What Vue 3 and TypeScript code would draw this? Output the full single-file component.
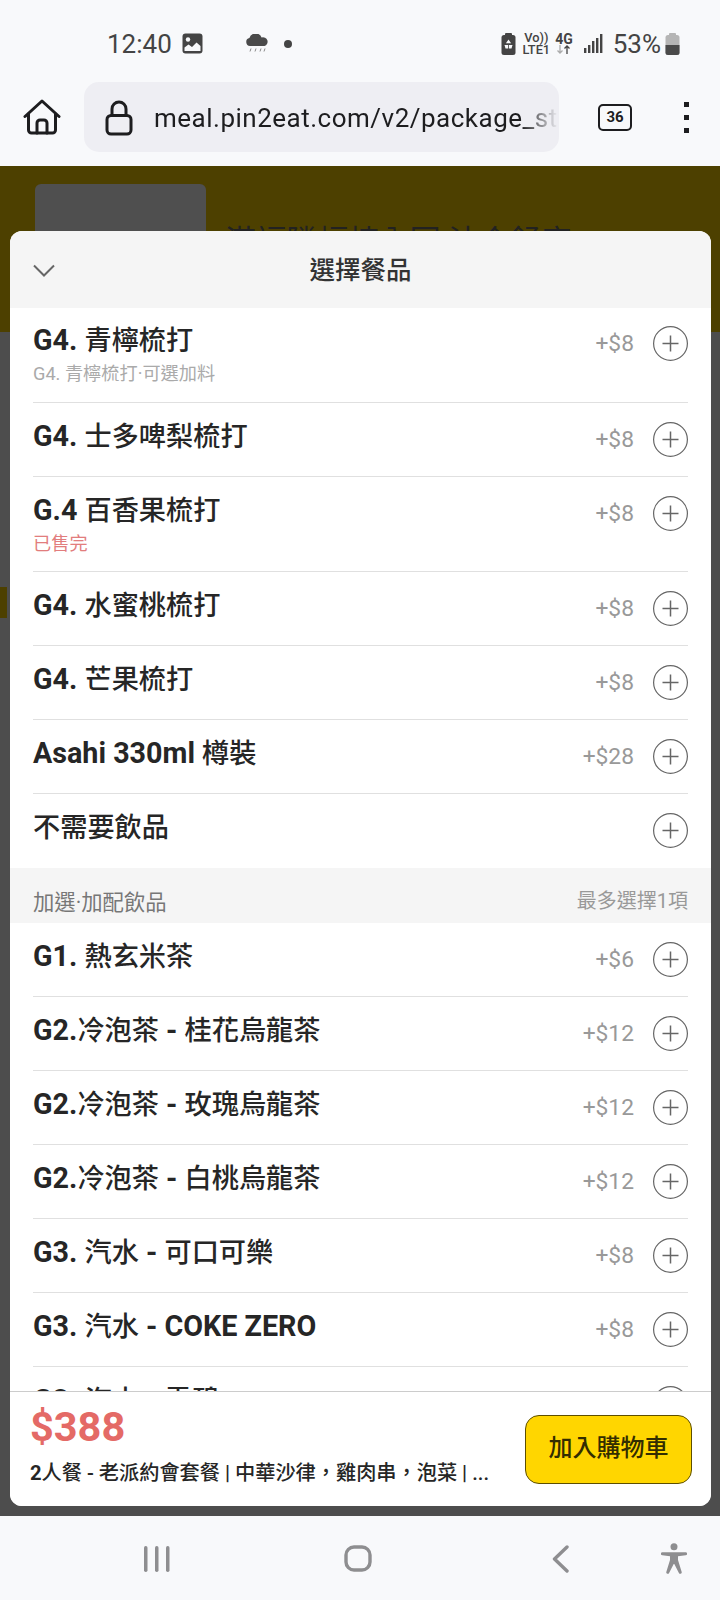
<script setup lang="ts">
interface Item { parts: string[]; price: string; note?: string; sold?: boolean }
// parts alternate: even index = Latin run, odd index = CJK run
const groupA: Item[] = [
  { parts: ['G4. ', '青檸梳打'], price: '+$8', note: 'G4. 青檸梳打·可選加料' },
  { parts: ['G4. ', '士多啤梨梳打'], price: '+$8' },
  { parts: ['G.4 ', '百香果梳打'], price: '+$8', note: '已售完', sold: true },
  { parts: ['G4. ', '水蜜桃梳打'], price: '+$8' },
  { parts: ['G4. ', '芒果梳打'], price: '+$8' },
  { parts: ['Asahi 330ml ', '樽裝'], price: '+$28' },
  { parts: ['', '不需要飲品'], price: '' },
]
const groupB: Item[] = [
  { parts: ['G1. ', '熱玄米茶'], price: '+$6' },
  { parts: ['G2.', '冷泡茶', ' - ', '桂花烏龍茶'], price: '+$12' },
  { parts: ['G2.', '冷泡茶', ' - ', '玫瑰烏龍茶'], price: '+$12' },
  { parts: ['G2.', '冷泡茶', ' - ', '白桃烏龍茶'], price: '+$12' },
  { parts: ['G3. ', '汽水', ' - ', '可口可樂'], price: '+$8' },
  { parts: ['G3. ', '汽水', ' - COKE ZERO'], price: '+$8' },
  { parts: ['G3. ', '汽水', ' - ', '雪碧'], price: '+$8' },
]
</script>

<template>
  <div class="phone">
    <div class="status">
      <span class="time">12:40</span>
      <svg class="ic-gallery" width="21" height="21" viewBox="0 0 21 21">
        <rect x="0.5" y="0.5" width="20" height="20" rx="3" fill="#444" />
        <circle cx="6" cy="6.5" r="2.2" fill="#f8f9fb" />
        <path d="M2.5 18v-3.5l4-3 3.5 2.5 4.5-4.5 4 3.5V18z" fill="#f8f9fb" />
      </svg>
      <svg class="ic-rain" width="24" height="20" viewBox="0 0 24 20">
        <path d="M5 12a4 4 0 0 1-.6-7.9A6.5 6.5 0 0 1 16.6 3.4 4.3 4.3 0 0 1 19.500 12z" fill="#4a4a4a" />
        <path d="M6 14.500l-1 3M11 14.500l-1 3M16 14.500l-1 3M20 14.500l-1 3" stroke="#8a8a8a" stroke-width="1" fill="none" />
      </svg>
      <span class="dot"></span>
      <span class="status-gap"></span>
      <svg class="ic-saver" width="15" height="22" viewBox="0 0 15 22">
        <rect x="4" y="0" width="7" height="3" rx="1" fill="#444" />
        <rect x="0.500" y="2" width="14" height="20" rx="2.500" fill="#444" />
        <path d="M7.500 6.500l2.600 3.800H4.900zM3.500 12h3.700v3.500H4.500zM8 12h3.500l-1 3.500H8z" fill="#f8f9fb" />
      </svg>
      <div class="net"><span>Vo))</span><span>LTE1</span></div>
      <div class="fourg"><span>4G</span><svg width="15" height="9" viewBox="0 0 15 9"><path d="M4 0v8M1.500 5.500L4 8l2.500-2.500" stroke="#aaa" stroke-width="1.300" fill="none" /><path d="M11 9V1M8.500 3.500L11 1l2.500 2.500" stroke="#444" stroke-width="1.300" fill="none" /></svg></div>
      <svg class="signal" width="19" height="20" viewBox="0 0 19 20">
        <rect x="0" y="14" width="2.400" height="5" fill="#444" />
        <rect x="4" y="11" width="2.400" height="8" fill="#444" />
        <rect x="8" y="7" width="2.400" height="12" fill="#444" />
        <rect x="12" y="4" width="2.400" height="15" fill="#444" />
        <rect x="16" y="0" width="2.400" height="19" fill="#444" />
      </svg>
      <span class="pct">53%</span>
      <svg width="15" height="22" viewBox="0 0 15 22">
        <rect x="4" y="0" width="7" height="3" rx="1" fill="#b5b5b5" />
        <rect x="0.500" y="2" width="14" height="20" rx="2.500" fill="#b5b5b5" />
        <path d="M0.500 12h14v7.500a2.500 2.500 0 0 1-2.500 2.500H3a2.500 2.500 0 0 1-2.500-2.500z" fill="#4a4a4a" />
      </svg>
    </div>

    <div class="browser">
      <svg class="home" width="38" height="36" viewBox="0 0 38 36" fill="none" stroke="#1d1d1f" stroke-width="3" stroke-linejoin="round" stroke-linecap="round">
        <path d="M2 17.500L19 2l17 15.500" />
        <path d="M5.500 15v16a3 3 0 0 0 3 3h21a3 3 0 0 0 3-3V15" />
        <path d="M14 34V24a3 3 0 0 1 3-3h4a3 3 0 0 1 3 3v10" />
      </svg>
      <div class="url">
        <svg class="lock" width="28" height="36" viewBox="0 0 28 36" fill="none" stroke="#1d1d1f" stroke-width="3">
          <rect x="2" y="15.500" width="24" height="18.500" rx="4" />
          <path d="M7 15.500V9a7 7 0 0 1 14 0v6.500" />
        </svg>
        <span class="url-text">meal.pin2eat.com/v2/package_store</span>
      </div>
      <div class="tabs">36</div>
      <div class="more"><i></i><i></i><i></i></div>
    </div>

    <div class="view">
      <div class="bg-hero">
        <div class="bg-thumb"></div>
        <div class="bg-title">滿福隣幅棟內园 沽会舒序</div>
      </div>
      <div class="bg-strip"></div>

      <div class="sheet">
        <div class="sheet-head">
          <svg class="chev" width="22" height="13" viewBox="0 0 22 13" fill="none" stroke="#666" stroke-width="2"><path d="M1 1.500l10 10 10-10" /></svg>
          <span class="sheet-title">選擇餐品</span>
        </div>

        <div class="list">
          <div v-for="(it, i) in groupA" :key="'a' + i" class="row" :class="{ last: i === groupA.length - 1 }">
            <div class="row-main">
              <div class="name"><span v-for="(p, j) in it.parts" :key="j" :class="j % 2 ? 'cjk' : 'lat'">{{ p }}</span></div>
              <div v-if="it.note" class="note" :class="{ sold: it.sold }">{{ it.note }}</div>
            </div>
            <span class="price">{{ it.price }}</span>
            <svg class="plus" width="35" height="35" viewBox="0 0 35 35" fill="none" stroke="#666" stroke-width="1.200">
              <circle cx="17.500" cy="17.500" r="16.900" />
              <path d="M9.500 17.500h16M17.500 9.500v16" stroke-width="1.500" />
            </svg>
          </div>

          <div class="section">
            <span class="section-name">加選·加配飲品</span>
            <span class="section-limit">最多選擇1項</span>
          </div>

          <div v-for="(it, i) in groupB" :key="'b' + i" class="row">
            <div class="row-main">
              <div class="name"><span v-for="(p, j) in it.parts" :key="j" :class="j % 2 ? 'cjk' : 'lat'">{{ p }}</span></div>
            </div>
            <span class="price">{{ it.price }}</span>
            <svg class="plus" width="35" height="35" viewBox="0 0 35 35" fill="none" stroke="#666" stroke-width="1.200">
              <circle cx="17.500" cy="17.500" r="16.900" />
              <path d="M9.500 17.500h16M17.500 9.500v16" stroke-width="1.500" />
            </svg>
          </div>
        </div>

        <div class="foot">
          <div class="foot-info">
            <div class="total">$388</div>
            <div class="desc"><b>2</b>人餐 - 老派約會套餐 | 中華沙律，雞肉串，泡菜 | ...</div>
          </div>
          <button class="add">加入購物車</button>
        </div>
      </div>
    </div>

    <div class="nav">
      <svg class="nav-recent" width="26" height="26" viewBox="0 0 26 26" fill="#8e8e90">
        <rect x="0" y="0" width="3.500" height="26" rx="1.700" />
        <rect x="11" y="0" width="3.500" height="26" rx="1.700" />
        <rect x="22" y="0" width="3.500" height="26" rx="1.700" />
      </svg>
      <svg class="nav-home" width="28" height="27" viewBox="0 0 28 27" fill="none" stroke="#8e8e90" stroke-width="3.400"><rect x="2" y="2" width="24" height="23" rx="8" /></svg>
      <svg class="nav-back" width="17" height="28" viewBox="0 0 17 28" fill="none" stroke="#8e8e90" stroke-width="3.400" stroke-linecap="round" stroke-linejoin="round"><path d="M15 2L2.500 14 15 26" /></svg>
      <svg class="nav-a11y" width="26" height="31" viewBox="0 0 26 31" fill="#8e8e90">
        <circle cx="13" cy="3.800" r="3.500" />
        <path d="M1.300 9.300h23.400a1.300 1.300 0 0 1 0 2.900l-7.700 1v3.800l3.700 12a1.500 1.500 0 0 1-2.800 1L13.300 21h-.6L8.100 30a1.500 1.500 0 0 1-2.800-1l3.700-12v-3.800l-7.700-1a1.300 1.300 0 0 1 0-2.900z" />
      </svg>
    </div>
  </div>
</template>

<style scoped>
.phone {
  width: 720px;
  height: 1600px;
  display: flex;
  flex-direction: column;
  overflow: hidden;
  background: #f8f9fb;
  font-family: Roboto, "Noto Sans CJK TC", sans-serif;
  color: #222;
}
.status {
  height: 82px;
  flex: none;
  display: flex;
  align-items: center;
  padding: 5px 40px 0 107px;
  box-sizing: border-box;
  color: #444;
}
.time { font-size: 26px; }
.ic-gallery { margin-left: 10px; }
.ic-rain { margin-left: 42px; }
.dot { width: 8px; height: 8px; border-radius: 50%; background: #444; margin-left: 15px; }
.status-gap { flex: 1; }
.ic-saver { flex: none; }
.net { display: flex; flex-direction: column; align-items: center; font-size: 12.800px; line-height: 11.500px; font-weight: 500; margin-left: 6px; }
.fourg { display: flex; flex-direction: column; align-items: center; font-size: 14px; line-height: 11px; font-weight: 700; margin-left: 5px; }
.signal { margin-left: 11px; flex: none; }
.pct { font-size: 26px; margin-left: 10px; margin-right: 4px; }

.browser {
  height: 84px;
  flex: none;
  display: flex;
  align-items: center;
  padding-bottom: 14px;
  box-sizing: border-box;
}
.home { margin-left: 23px; flex: none; }
.url {
  width: 475px;
  height: 70px;
  margin-left: 23px;
  background: #eeeef3;
  border-radius: 15px;
  display: flex;
  align-items: center;
  padding-left: 21px;
  box-sizing: border-box;
  overflow: hidden;
}
.lock { flex: none; margin-top: 2px; }
.url-text {
  margin-left: 21px;
  margin-top: 2px;
  font-size: 26px;
  letter-spacing: 0.5px;
  white-space: nowrap;
  color: #1d1d1f;
  width: 404px;
  flex: none;
  overflow: hidden;
  -webkit-mask-image: linear-gradient(90deg, #000 91%, transparent 100%);
  mask-image: linear-gradient(90deg, #000 91%, transparent 100%);
}
.tabs {
  width: 34px;
  height: 27px;
  margin-left: 39px;
  border: 2.500px solid #1d1d1f;
  border-radius: 5px;
  box-sizing: border-box;
  display: flex;
  align-items: center;
  justify-content: center;
  font-size: 15px;
  font-weight: 700;
  color: #1d1d1f;
}
.more {
  margin-left: 52px;
  display: flex;
  flex-direction: column;
  gap: 8px;
}
.more i { display: block; width: 5px; height: 5px; background: #1d1d1f; }

.view {
  flex: 1;
  position: relative;
  background: #4d4d4d;
  overflow: hidden;
}
.bg-hero {
  height: 166px;
  background: #4d4000;
  padding: 18px 0 0 35px;
  box-sizing: border-box;
  display: flex;
  gap: 19px;
}
.bg-thumb { width: 171px; height: 100px; background: #4f4f4f; border-radius: 6px; }
.bg-title { margin-top: 37px; font-size: 30.800px; line-height: 42px; color: #222; white-space: nowrap; }
.bg-strip { width: 7px; height: 31px; margin-top: 255px; background: #4d4000; }

.sheet {
  position: absolute;
  left: 10px;
  top: 65px;
  width: 701px;
  height: 1275px;
  background: #fff;
  border-radius: 12px;
  overflow: hidden;
  display: flex;
  flex-direction: column;
}
.sheet-head {
  height: 77px;
  flex: none;
  background: #f5f5f5;
  position: relative;
  display: flex;
  align-items: center;
  justify-content: center;
}
.chev { position: absolute; left: 23px; top: 33px; }
.sheet-title { font-size: 25.500px; font-weight: 500; color: #333; margin-bottom: 4px; }

.list { flex: 1; overflow: hidden; min-height: 0; }
.row {
  margin: 0 23px;
  display: flex;
  align-items: flex-start;
  border-bottom: 1px solid #e0e0e0;
  padding: 15px 0 19px;
}
.row:first-child { padding: 14px 0 20px; }
.row.last { border-bottom: none; padding-bottom: 20px; }
.row-main { flex: 1; min-width: 0; }
.name { height: 36px; line-height: 36px; color: #262626; white-space: pre-wrap; }
.lat { font-size: 28.700px; font-weight: 700; }
.cjk { font-size: 27.200px; font-weight: 500; }
.note { font-size: 18.200px; line-height: 22px; margin: 5px 0 -3px; color: #aaa; }
.note.sold { color: #e27d7d; }
.price { font-size: 22.800px; line-height: 34px; color: #999; margin-right: 19px; margin-top: 5px; }
.plus { flex: none; margin-top: 4px; }

.section {
  height: 55px;
  background: #f5f5f5;
  display: flex;
  justify-content: space-between;
  align-items: flex-end;
  padding: 0 23px 6px;
  box-sizing: border-box;
}
.section-name { font-size: 21.330px; line-height: 28px; color: #777; }
.section-limit { font-size: 20px; line-height: 28px; color: #999; padding-bottom: 2px; }

.foot {
  height: 115px;
  flex: none;
  background: #fff;
  border-top: 1px solid #ccc;
  box-sizing: border-box;
  display: flex;
  padding: 0 19px 0 20px;
}
.foot-info { flex: 1; min-width: 0; padding-top: 12px; }
.total { font-size: 41.500px; line-height: 46px; font-weight: 700; color: #e46a66; }
.desc { font-size: 20.200px; line-height: 28px; margin-top: 9px; font-weight: 500; color: #262626; white-space: nowrap; overflow: hidden; }
.desc b { font-weight: 700; }
.add {
  flex: none;
  width: 167px;
  height: 69px;
  margin-top: 23px;
  background: #ffd600;
  border: 1px solid #5d4f00;
  border-radius: 14px;
  font-family: inherit;
  font-size: 24px;
  font-weight: 500;
  color: #332d00;
  padding: 0 0 8px;
}

.nav {
  height: 84px;
  flex: none;
  display: flex;
  align-items: center;
}
.nav-recent { flex: none; margin-left: 144px; margin-top: 2px; }
.nav-home { flex: none; margin-left: 174px; margin-top: 1px; }
.nav-back { flex: none; margin-left: 180px; margin-top: 1px; }
.nav-a11y { flex: none; margin-left: 92px; margin-top: 1px; }
</style>
